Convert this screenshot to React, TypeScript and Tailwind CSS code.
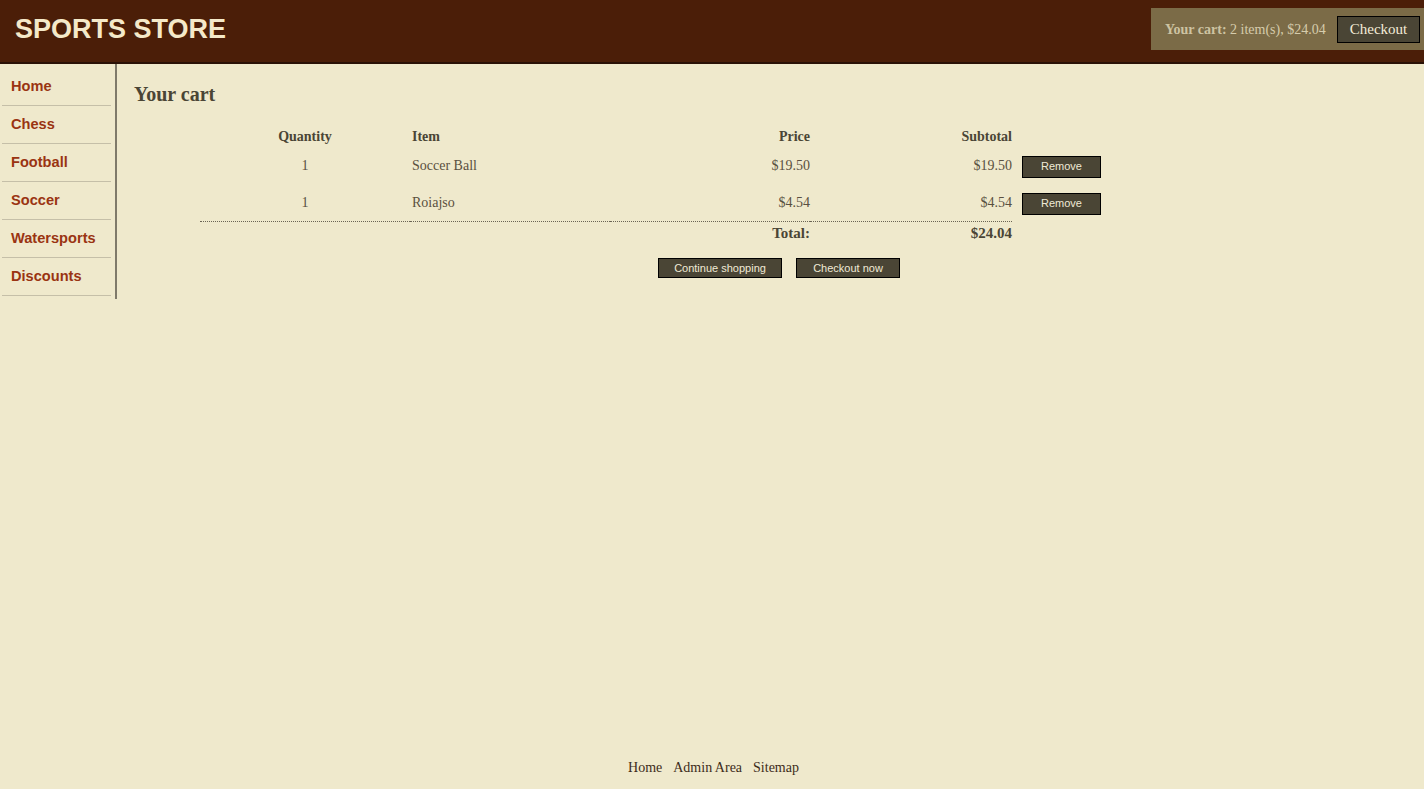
import React from "react";

const categories = ["Home", "Chess", "Football", "Soccer", "Watersports", "Discounts"];

const lines = [
  { qty: 1, name: "Soccer Ball", price: "$19.50", subtotal: "$19.50" },
  { qty: 1, name: "Roiajso", price: "$4.54", subtotal: "$4.54" },
];

const serif = "font-['Liberation_Serif',serif]";
const sans = "font-['Liberation_Sans',Arial,sans-serif]";

export default function App() {
  return (
    <div className={`min-h-screen flex flex-col bg-[#efe9cc] ${serif}`}>
      {/* Header */}
      <header className="h-[64px] bg-[#4b1e08] border-b-2 border-[#2a1106] flex items-start justify-between">
        <h1 className={`${sans} font-bold text-[27px] leading-none text-[#f5e9c9] pl-[15px] pt-[16px]`}>
          SPORTS STORE
        </h1>
        <div className="mt-[8px] h-[42px] w-[273px] bg-[#7b6b47] flex items-center justify-between pl-[14px] pr-[4px]">
          <span className="whitespace-nowrap text-[14px] text-[#d6ccac]">
            <b className="text-[#cdc3a2]">Your cart:</b> 2 item(s), $24.04
          </span>
          <button className="h-[27px] w-[83px] bg-[#4a4535] border border-black text-[15px] text-[#f3ecd8]">
            Checkout
          </button>
        </div>
      </header>

      <div className="flex items-start">
        {/* Category nav */}
        <nav className="w-[117px] border-r-2 border-[#7f7a6a] pt-[4px] pb-[3px] pl-[2px] pr-[4px]">
          {categories.map((c) => (
            <a
              key={c}
              href="#"
              className={`${sans} block h-[38px] border-b border-[#c5bfa8] pl-[9px] leading-[37px] text-[14.6px] font-bold text-[#9a3412]`}
            >
              {c}
            </a>
          ))}
        </nav>

        {/* Cart */}
        <main className="flex-1 pl-[17px] pt-[18px]">
          <h2 className="text-[20px] leading-[24px] font-bold text-[#4a4535]">Your cart</h2>

          <div className="ml-[66px] w-[1158px] mt-[19px]">
            <table className="border-collapse text-[14px] text-[#5a5040]">
              <thead>
                <tr className="h-[22px] font-bold text-[#4a4535]">
                  <th className="w-[210px] text-center p-0">Quantity</th>
                  <th className="w-[200px] text-left p-0 pl-[2px]">Item</th>
                  <th className="w-[200px] text-right p-0">Price</th>
                  <th className="w-[202px] text-right p-0">Subtotal</th>
                  <th className="w-[90px] p-0"></th>
                </tr>
              </thead>
              <tbody>
                {lines.map((l) => (
                  <tr key={l.name} className="h-[37px]">
                    <td className="text-center p-0">{l.qty}</td>
                    <td className="text-left p-0 pl-[2px]">{l.name}</td>
                    <td className="text-right p-0">{l.price}</td>
                    <td className="text-right p-0">{l.subtotal}</td>
                    <td className="p-0 pl-[10px] pt-[2px]">
                      <button className={`${sans} h-[22px] w-[79px] bg-[#4a4535] border border-black text-[11px] text-[#f0ead6]`}>
                        Remove
                      </button>
                    </td>
                  </tr>
                ))}
              </tbody>
              <tfoot>
                <tr className="h-[20px] font-bold text-[15px] text-[#4a4535]">
                  <td colSpan={3} className="text-right p-0 border-t border-dotted border-[#6a6454]">
                    Total:
                  </td>
                  <td className="text-right p-0 border-t border-dotted border-[#6a6454]">$24.04</td>
                  <td className="p-0"></td>
                </tr>
              </tfoot>
            </table>

            <div className={`${sans} flex justify-center gap-[14px] mt-[14px]`}>
              <button className="h-[20px] w-[124px] bg-[#4a4535] border border-black text-[11px] text-[#f0ead6]">
                Continue shopping
              </button>
              <button className="h-[20px] w-[104px] bg-[#4a4535] border border-black text-[11px] text-[#f0ead6]">
                Checkout now
              </button>
            </div>
          </div>
        </main>
      </div>

      {/* Footer */}
      <footer className="mt-auto flex justify-center gap-[11px] pb-[11px] pl-[3px] text-[14px] text-[#3d2c1a]">
        <a href="#">Home</a>
        <a href="#">Admin Area</a>
        <a href="#">Sitemap</a>
      </footer>
    </div>
  );
}
